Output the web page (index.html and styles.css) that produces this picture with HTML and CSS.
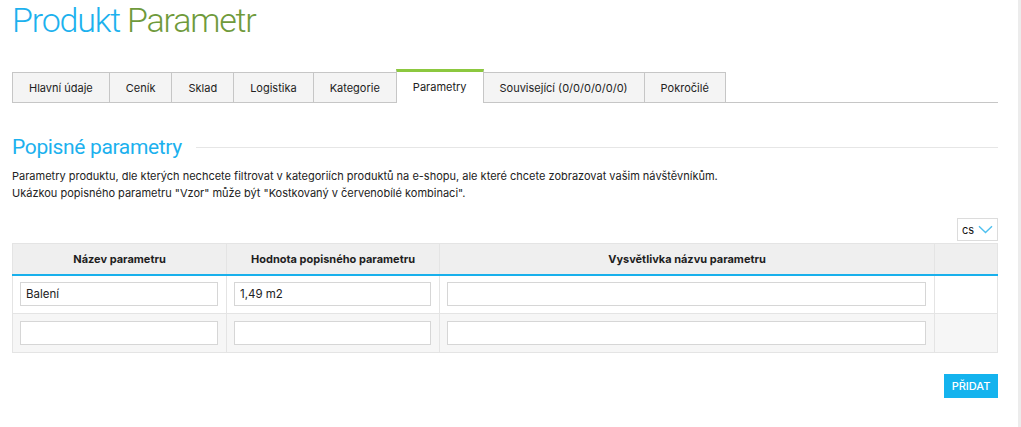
FILE: index.html
```html
<!DOCTYPE html>
<html lang="cs">
<head>
<meta charset="utf-8">
<title>Produkt Parametr</title>
<link rel="stylesheet" href="styles.css">
</head>
<body>
<div class="page">
  <main class="main">
    <h1 class="title"><span class="t-blue">Produkt</span> <span class="t-green">Parametr</span></h1>

    <nav class="tabs">
      <div class="tab">Hlavní údaje</div>
      <div class="tab">Ceník</div>
      <div class="tab">Sklad</div>
      <div class="tab">Logistika</div>
      <div class="tab">Kategorie</div>
      <div class="tab active">Parametry</div>
      <div class="tab">Související (0/0/0/0/0/0)</div>
      <div class="tab">Pokročilé</div>
    </nav>

    <div class="section-head">
      <h2 class="section-title">Popisné parametry</h2>
      <div class="section-line"></div>
    </div>

    <p class="desc">Parametry produktu, dle kterých nechcete filtrovat v kategoriích produktů na e-shopu, ale které chcete zobrazovat vašim návštěvníkům.<br>Ukázkou popisného parametru "Vzor" může být "Kostkovaný v červenobílé kombinaci".</p>

    <div class="lang-row">
      <div class="lang-select">
        <span class="lang-text">cs</span>
        <svg class="chev" width="15" height="9" viewBox="0 0 15 9"><path d="M1 1.2 L7.5 7.5 L14 1.2" fill="none" stroke="#4fc0ef" stroke-width="1.4"/></svg>
      </div>
    </div>

    <table class="params">
      <colgroup>
        <col class="c1"><col class="c2"><col class="c3"><col class="c4">
      </colgroup>
      <thead>
        <tr>
          <th>Název parametru</th>
          <th>Hodnota popisného parametru</th>
          <th>Vysvětlivka názvu parametru</th>
          <th></th>
        </tr>
      </thead>
      <tbody>
        <tr class="row-odd">
          <td><div class="field">Balení</div></td>
          <td><div class="field">1,49 m2</div></td>
          <td><div class="field"></div></td>
          <td></td>
        </tr>
        <tr class="row-even">
          <td><div class="field"></div></td>
          <td><div class="field"></div></td>
          <td><div class="field"></div></td>
          <td></td>
        </tr>
      </tbody>
    </table>

    <div class="actions">
      <button class="btn-add">PŘIDAT</button>
    </div>
  </main>
  <div class="scroll-strip"></div>
</div>
</body>
</html>
```

FILE: styles.css
```css
* { box-sizing: border-box; }

html, body {
  margin: 0;
  padding: 0;
  background: #ffffff;
}

body {
  font-family: Inter, "Noto Sans", "DejaVu Sans", sans-serif;
  color: #222222;
  height: 427px;
  overflow: hidden;
}

.page {
  display: flex;
  height: 427px;
}

.main {
  flex: 1;
  padding: 0 20px 0 12px;
}

.scroll-strip {
  width: 4px;
  background: #ececec;
}

.title {
  margin: 0;
  font-family: Roboto, "Liberation Sans", sans-serif;
  font-size: 34px;
  line-height: 40px;
  font-weight: 300;
  letter-spacing: -1.2px;
}

.t-blue { color: #1cb1ee; }
.t-green { color: #6f9a3b; }

.tabs {
  display: flex;
  align-items: flex-end;
  margin-top: 29px;
  border-bottom: 1px solid #c6c6c6;
  height: 34px;
}

.tab {
  height: 30px;
  padding: 0 16px;
  margin-right: -1px;
  border: 1px solid #c6c6c6;
  border-bottom: none;
  background: #f4f4f4;
  font-size: 11px;
  color: #222;
  display: flex;
  align-items: center;
  justify-content: center;
  white-space: nowrap;
}

.tab.active {
  height: 34px;
  margin-bottom: -1px;
  border-top: 3px solid #8cc83f;
  background: #ffffff;
  padding-bottom: 1px;
}

.section-head {
  display: flex;
  align-items: center;
  margin-top: 30px;
  height: 28px;
}

.section-title {
  margin: 0;
  font-family: Roboto, "Liberation Sans", sans-serif;
  font-size: 21px;
  line-height: 28px;
  font-weight: 400;
  color: #1cb1ee;
  white-space: nowrap;
  letter-spacing: -0.35px;
}

.section-line {
  flex: 1;
  height: 1px;
  background: #e6e6e6;
  margin-left: 14px;
  margin-top: 1px;
}

.desc {
  margin: 7px 0 0 0;
  font-size: 11px;
  line-height: 17px;
  color: #222;
}

.lang-row {
  display: flex;
  justify-content: flex-end;
  margin-top: 16px;
}

.lang-select {
  width: 41px;
  height: 23px;
  border: 1px solid #dcdcdc;
  display: flex;
  align-items: center;
  padding-left: 4px;
  gap: 4px;
}

.lang-text {
  font-size: 11px;
  color: #111;
}

.chev { display: block; }

.params {
  width: 100%;
  margin-top: 2px;
  border-collapse: collapse;
  table-layout: fixed;
  border: 1px solid #e4e4e4;
}

.c1 { width: 214px; }
.c2 { width: 213px; }
.c3 { width: 495px; }
.c4 { width: 63px; }

.params th {
  height: 31px;
  background: #efefef;
  font-size: 11px;
  font-weight: 700;
  color: #1e1e1e;
  text-align: center;
  border-left: 1px solid #e4e4e4;
  border-bottom: 2px solid #18b0ec;
  padding: 0;
}

.params td {
  height: 39px;
  padding: 0 8px 0 7px;
  border-left: 1px solid #e4e4e4;
  border-top: 1px solid #e4e4e4;
  vertical-align: middle;
}

.row-odd td { background: #ffffff; }
.row-even td { background: #f6f6f6; }

.params thead + tbody tr:first-child td { border-top: none; }

.field {
  height: 24px;
  border: 1px solid #d6d6d6;
  background: #ffffff;
  font-size: 11.5px;
  line-height: 22px;
  padding-left: 5px;
  color: #222;
}

.actions {
  display: flex;
  justify-content: flex-end;
  margin-top: 21px;
}

.btn-add {
  width: 54px;
  height: 24px;
  border: none;
  background: #14b3ee;
  color: #ffffff;
  font-family: Inter, "Noto Sans", sans-serif;
  font-size: 11px;
  font-weight: 500;
  padding: 0;
  cursor: pointer;
}
```
